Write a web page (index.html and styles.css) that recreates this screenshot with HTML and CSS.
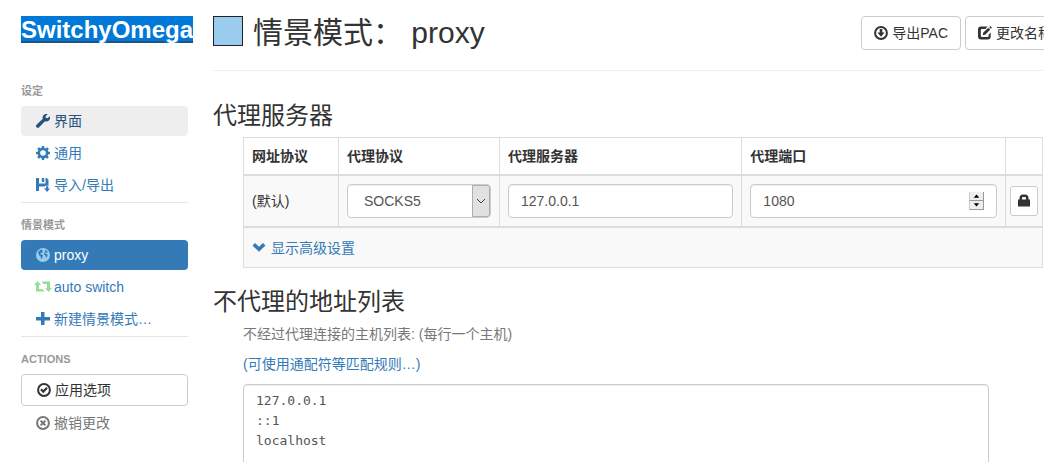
FILE: index.html
```html
<!DOCTYPE html>
<html lang="zh-CN">
<head>
  <meta charset="UTF-8">
  <title>SwitchyOmega</title>
  <link rel="stylesheet" href="styles.css">
</head>
<body>
  <div class="page">
    <nav class="sidebar">
      <h1 class="brand"><a href="#">SwitchyOmega</a></h1>

      <h2 class="nav-header">设定</h2>
      <ul class="nav">
        <li><a href="#ui" class="hover">
          <svg class="icon" viewBox="0 0 14 14"><path d="M13.800 2.200 11.500 4.200 9.800 3.700 9.500 2.200 11.700.2C10.100-.4 8.200.1 7.300 1.400c-.8 1-.9 2.300-.5 3.400L.6 10.700c-.8.8-.8 1.900-.1 2.600.8.8 1.900.7 2.600-.1L9 7.200c1.300.5 2.800.2 3.900-.8 1.100-1 1.400-2.700.9-4.200z"/></svg>
          界面</a></li>
        <li><a href="#general">
          <svg class="icon" viewBox="0 0 14 14"><path fill-rule="evenodd" d="M5.900 0h2.200l.4 1.900 1.100.5L11.300 1.300l1.500 1.500-1.100 1.600.5 1.200 1.800.3v2.200l-1.900.4-.5 1.100 1.100 1.700-1.500 1.500-1.600-1.100-1.200.5L8.100 14H5.900l-.4-1.900-1.100-.5-1.700 1.100-1.500-1.500 1.100-1.600-.5-1.200L0 8.100V5.900l1.900-.4.5-1.100L1.300 2.700l1.500-1.500 1.600 1.100 1.200-.5zM7 4.200a2.800 2.800 0 1 0 0 5.600 2.800 2.800 0 0 0 0-5.600z"/></svg>
          通用</a></li>
        <li><a href="#io">
          <svg class="icon" viewBox="0 0 14 14"><path d="M0 0h3v5.500h6.500V0h1.200L12.500 1.800v6H9V10H7.700L9 11.300V8.500H3V13H0zM5.800 0h2.400v4H5.800zM10 8.300h2.200v2.200H14L11.100 14 8.200 10.500H10z"/></svg>
          导入/导出</a></li>
      </ul>

      <h2 class="nav-header divided">情景模式</h2>
      <ul class="nav">
        <li><a href="#proxy" class="active">
          <svg class="icon globe" viewBox="0 0 14 14"><circle cx="7" cy="7" r="7"/><path class="land" d="M3.800 2.200 6 1.500l.8.6-.8.900 1 .5-.5 1.100L4.800 5l-.6 1 1.500.5 1.300 1.300-.5 1.300-.8 1.800-.7-.3-.4-2L3.300 7.500 2.500 5.700 2.100 4.300zM9.200 1.800l1.800 1.100 1 1.500-.7.300-1.300-.4-.8.5.6 1.100 1.800.6-.2 1.500-1.200 1.800-.8-2.100-1.200-1.300L8 5.400 9 4z"/></svg>
          proxy</a></li>
        <li><a href="#auto">
          <svg class="icon retweet" viewBox="0 0 18 14"><path d="M3.500 1 7 5H5v4h3.500l2 2.500H2V5H0zM7.500 1.500H16V8h2l-3.500 4L11 8h2V4H9.500z"/></svg>
          auto switch</a></li>
        <li><a href="#new">
          <svg class="icon" viewBox="0 0 14 14"><path d="M5 0h3.500v5H14v3.500H8.500V13H5V8.500H0V5h5z"/></svg>
          新建情景模式…</a></li>
      </ul>

      <h2 class="nav-header divided">ACTIONS</h2>
      <div class="nav">
        <button type="button" class="apply">
          <svg class="icon" viewBox="0 0 14 14"><circle class="ring" cx="7" cy="7" r="5.900"/><path d="m3.200 7 1.500-1.400 1.600 1.500L9.300 4l1.500 1.500-4.500 4.700z"/></svg>
          应用选项</button>
        <button type="button" class="discard">
          <svg class="icon" viewBox="0 0 14 14"><circle class="ring" cx="7" cy="7" r="5.900"/><path d="m5.200 3.900 1.800 1.700 1.800-1.700 1.300 1.300L8.400 7l1.700 1.800-1.300 1.300L7 8.400l-1.800 1.700-1.300-1.300L5.600 7 3.900 5.200z"/></svg>
          撤销更改</button>
      </div>
    </nav>

    <main class="content">
      <header class="page-header">
        <input type="color" class="swatch" value="#99ccee" aria-label="颜色">
        <h2>情景模式： proxy</h2>
        <div class="actions">
          <button type="button" class="btn">
            <svg class="icon" viewBox="0 0 14 14"><circle class="ring" cx="7" cy="7" r="5.900"/><path d="M5.700 3h2.600v3.500h2.300L7 10.800 3.400 6.500h2.300z"/></svg>
            导出PAC</button>
          <button type="button" class="btn">
            <svg class="icon" viewBox="0 0 14 14"><path d="M3 .5h6.500L7.500 3H4Q2.800 3 2.800 4.200v5.600Q2.800 11 4 11h5.500q1.200 0 1.200-1.200V8.500l2-2V10.500q0 3-3 3H3q-3 0-3-3v-7q0-3 3-3zM12.200 0 14 1.800l-1 1L11.200 1zM10.400 1.700l1.900 1.900L7.500 8.600l-2.800.7.6-2.800z"/></svg>
            更改名称</button>
        </div>
      </header>

      <section>
        <h3>代理服务器</h3>
        <div class="inset">
          <table class="servers">
            <colgroup>
              <col class="col-scheme">
              <col class="col-protocol">
              <col>
              <col class="col-port">
              <col class="col-auth">
            </colgroup>
            <thead>
              <tr>
                <th>网址协议</th>
                <th>代理协议</th>
                <th>代理服务器</th>
                <th>代理端口</th>
                <th></th>
              </tr>
            </thead>
            <tbody>
              <tr>
                <td>(默认)</td>
                <td>
                  <div class="select-box">
                    <select class="form-control" aria-label="代理协议">
                      <option>SOCKS5</option>
                      <option>SOCKS4</option>
                      <option>HTTP</option>
                      <option>HTTPS</option>
                    </select>
                    <span class="drop"><svg viewBox="0 0 10 6"><path d="m1 1 4 4 4-4"/></svg></span>
                  </div>
                </td>
                <td><input type="text" class="form-control" value="127.0.0.1" aria-label="代理服务器"></td>
                <td>
                  <div class="port-box">
                    <input type="number" class="form-control" value="1080" aria-label="代理端口">
                    <span class="spinner">
                      <svg viewBox="0 0 14 8"><path d="M4 6 7 2.500 10 6z"/></svg>
                      <svg viewBox="0 0 14 8"><path d="M4 2 7 5.500 10 2z"/></svg>
                    </span>
                  </div>
                </td>
                <td class="auth">
                  <button type="button" class="btn-lock" aria-label="代理登录">
                    <svg class="icon" viewBox="0 0 14 14"><path fill-rule="evenodd" d="M1 5.500H2.500V4Q2.500.500 6 .500h2Q11.500.500 11.500 4v1.500H13v7H1zM5 5.500h4V4Q9 3 8 3H6Q5 3 5 4z"/></svg>
                  </button>
                </td>
              </tr>
            </tbody>
            <tbody>
              <tr class="more">
                <td colspan="5"><a href="#advanced">
                  <svg class="icon" viewBox="0 0 14 14"><path d="m.5 4.500 2.500-2.500 4 3.800L11 2l2.500 2.500L7 10.800z"/></svg>
                  显示高级设置</a></td>
              </tr>
            </tbody>
          </table>
        </div>
      </section>

      <section>
        <h3>不代理的地址列表</h3>
        <div class="inset">
          <p class="help"><label for="bypass">不经过代理连接的主机列表: (每行一个主机)</label></p>
          <p><a href="#patterns">(可使用通配符等匹配规则…)</a></p>
          <textarea id="bypass" class="bypass" rows="10">127.0.0.1
::1
localhost</textarea>
        </div>
      </section>
    </main>
  </div>
</body>
</html>
```
FILE: styles.css
```css
* {
  box-sizing: border-box;
}
html {
  height: 100%;
  overflow: hidden;
}
body {
  height: 100%;
  margin: 0;
  overflow: hidden;
  background-color: #fff;
  color: #333;
  font-family: "Liberation Sans", "Noto Sans CJK SC", sans-serif;
  font-size: 14px;
  line-height: 20px;
}
a {
  color: #337ab7;
  text-decoration: none;
}
h1, h2, h3, p, ul {
  margin: 0;
  padding: 0;
}
button, input, select, textarea {
  font: inherit;
}
.icon {
  width: 14px;
  height: 14px;
  flex: none;
  fill: currentColor;
}
.ring {
  fill: none;
  stroke: currentColor;
  stroke-width: 2;
}
.page {
  display: grid;
  grid-template-columns: 167px minmax(0, 1fr);
  column-gap: 25px;
  padding: 16px 0 0 21px;
}

/* sidebar */
.brand {
  height: 65px;
  font-size: 24px;
  line-height: 27px;
}
.brand a {
  display: inline-block;
  background-color: #0078d7;
  color: #fff;
  text-decoration: underline 2px #23527c;
  text-underline-offset: 3px;
}
.nav-header {
  height: 25px;
  padding-bottom: 5px;
  color: #999;
  font-size: 11px;
  line-height: 20px;
}
.nav-header.divided {
  height: 38px;
  margin-top: 2px;
  padding-top: 12px;
  border-top: 1px solid #e5e5e5;
}
.nav {
  display: flex;
  flex-direction: column;
  gap: 2px;
  list-style: none;
}
.nav a, .nav button {
  display: flex;
  align-items: center;
  gap: 4px;
  width: 100%;
  padding: 5px 15px;
  border: 0;
  border-radius: 4px;
  background: none;
  line-height: 20px;
  white-space: nowrap;
  cursor: pointer;
}
.nav a.hover {
  background-color: #eee;
  color: #23527c;
}
.nav a.active {
  background-color: #337ab7;
  color: #fff;
}
.globe {
  fill: #9ce;
}
.globe .land {
  fill: #337ab7;
}
.icon.retweet {
  width: 18px;
  margin: 0 -2px;
  fill: #9d9;
}
.nav .apply {
  border: 1px solid #ccc;
  background-color: #fff;
  color: #333;
}
.nav .discard {
  color: #777;
}

/* main column */
.page-header {
  display: flex;
  align-items: flex-start;
  gap: 10px;
  height: 55px;
  margin-right: -21px;
  border-bottom: 1px solid #eee;
}
.page-header h2 {
  font-size: 30px;
  font-weight: normal;
  line-height: 34px;
  white-space: nowrap;
}
.swatch {
  width: 30px;
  height: 30px;
  padding: 0;
  border: 1px solid #222;
  background: none;
  appearance: none;
}
.swatch::-webkit-color-swatch-wrapper {
  padding: 0;
}
.swatch::-webkit-color-swatch {
  border: 0;
  border-radius: 0;
}
.actions {
  display: flex;
  gap: 4px;
  margin-left: auto;
}
.btn {
  display: flex;
  align-items: center;
  gap: 4px;
  padding: 6px 12px;
  border: 1px solid #ccc;
  border-radius: 4px;
  background-color: #fff;
  color: #333;
  white-space: nowrap;
}
h3 {
  font-size: 24px;
  font-weight: normal;
  line-height: 26px;
}
section h3 {
  padding: 21px 0 9px;
}
section:first-of-type h3 {
  padding: 32px 0 8px;
}
.inset {
  padding-left: 30px;
}
.form-control {
  display: block;
  width: 100%;
  height: 34px;
  padding: 6px 12px;
  border: 1px solid #ccc;
  border-radius: 4px;
  background-color: #fff;
  box-shadow: inset 0 1px 1px rgba(0, 0, 0, 0.075);
  color: #555;
}

/* server table */
.servers {
  width: calc(100% - 1px);
  table-layout: fixed;
  border-collapse: collapse;
}
.servers th, .servers td {
  padding: 8px;
  border: 1px solid #ddd;
  text-align: left;
}
.servers thead th {
  border-bottom-width: 2px;
}
.servers tbody {
  background-color: #f9f9f9;
}
.servers tbody + tbody {
  border-top: 2px solid #ddd;
}
.col-scheme {
  width: 95px;
}
.col-protocol {
  width: 161px;
}
.col-port {
  width: 33%;
}
.col-auth {
  width: 37px;
}
.servers .auth {
  padding: 0 4px;
}
.more a {
  display: flex;
  align-items: center;
  gap: 5px;
  height: 23px;
}
.select-box, .port-box {
  position: relative;
}
.select-box select {
  padding-left: 16px;
  appearance: none;
}
.drop {
  position: absolute;
  top: 1px;
  right: 1px;
  bottom: 1px;
  display: flex;
  align-items: center;
  justify-content: center;
  width: 18px;
  border: 1px solid #adadad;
  border-radius: 0 3px 3px 0;
  background-color: #e1e1e1;
  pointer-events: none;
}
.drop svg {
  width: 10px;
  height: 6px;
  fill: none;
  stroke: #444;
}
.port-box input {
  appearance: textfield;
}
.port-box input::-webkit-inner-spin-button {
  appearance: none;
}
.spinner {
  position: absolute;
  top: 8px;
  right: 13px;
  display: flex;
  flex-direction: column;
  pointer-events: none;
}
.spinner svg {
  width: 15px;
  height: 9px;
  border-right: 1px solid #999;
  border-bottom: 1px solid #999;
  border-left: 1px solid #ccc;
  background-color: #eee;
}
.btn-lock {
  display: flex;
  align-items: center;
  justify-content: center;
  width: 28px;
  height: 30px;
  padding: 0;
  border: 1px solid #ccc;
  border-radius: 3px;
  background-color: #fff;
  color: #333;
}

/* bypass list */
.inset p {
  margin-bottom: 10px;
}
.help {
  color: #777;
}
.bypass {
  display: block;
  width: calc(100% - 55px);
  padding: 6px 12px;
  border: 1px solid #ccc;
  border-radius: 4px;
  box-shadow: inset 0 1px 1px rgba(0, 0, 0, 0.075);
  color: #555;
  font-family: "DejaVu Sans Mono", monospace;
  font-size: 13px;
  line-height: 20px;
  resize: none;
}
```
